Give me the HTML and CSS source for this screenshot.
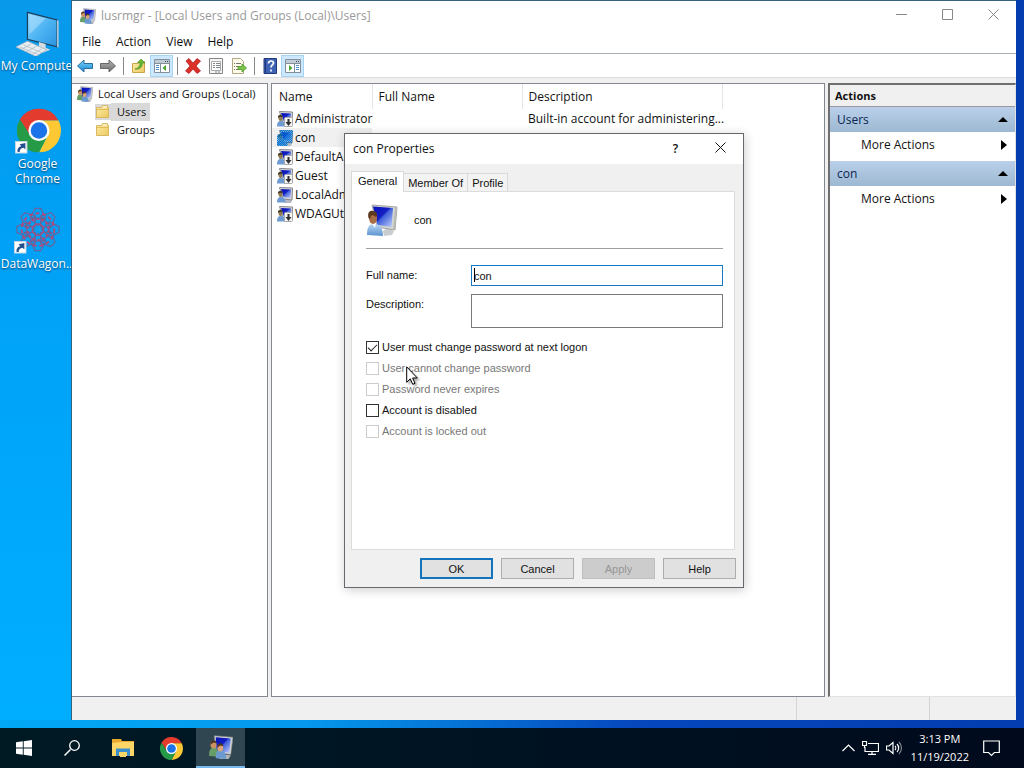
FILE: index.html
```html
<!DOCTYPE html>
<html lang="en">
<head>
<meta charset="utf-8">
<title>lusrmgr - [Local Users and Groups (Local)\Users]</title>
<link rel="stylesheet" href="styles.css">
</head>
<body>
<svg class="defs" aria-hidden="true">
  <defs>
    <linearGradient id="screen" x1="0" y1="0" x2="1" y2="1">
      <stop offset="0" stop-color="#0712b8"/><stop offset=".45" stop-color="#1420c4"/><stop offset=".5" stop-color="#3f5fd8"/><stop offset="1" stop-color="#c2d0ff"/>
    </linearGradient>
    <linearGradient id="glass" x1="0" y1="0" x2="1" y2="1">
      <stop offset="0" stop-color="#8fd4fb"/><stop offset=".5" stop-color="#4db4f3"/><stop offset="1" stop-color="#2a93df"/>
    </linearGradient>
    <linearGradient id="shirt" x1="0" y1="0" x2="0" y2="1">
      <stop offset="0" stop-color="#b9d6f3"/><stop offset="1" stop-color="#5b93cf"/>
    </linearGradient>
    <linearGradient id="paper" x1="0" y1="0" x2="1" y2="1">
      <stop offset="0" stop-color="#fdeea9"/><stop offset="1" stop-color="#ecc95f"/>
    </linearGradient>
    <linearGradient id="blue" x1="0" y1="0" x2="0" y2="1">
      <stop offset="0" stop-color="#7fd4fa"/><stop offset="1" stop-color="#1586d0"/>
    </linearGradient>
    <linearGradient id="grey" x1="0" y1="0" x2="0" y2="1">
      <stop offset="0" stop-color="#b4b4b4"/><stop offset="1" stop-color="#6c6c6c"/>
    </linearGradient>
    <pattern id="dither" width="2" height="2" patternUnits="userSpaceOnUse">
      <path d="M0 0h1v1H0zM1 1h1v1H1z" fill="#0078d7"/>
    </pattern>
    <symbol id="user" viewBox="0 0 32 32">
      <path d="M17 27l4-3 7 3-2 4-8 1z" fill="#c9cdd0"/>
      <path d="M6 1l25 2-2 23-18-3z" fill="#d4d6d3" stroke="#8f928e" stroke-width=".8"/>
      <path d="M7 2.500l20 1.500-1.500 19-14-2z" fill="url(#screen)"/>
      <path d="M29 4l2-1-2 23-2-1z" fill="#b8bcb4"/>
      <path d="M1 31c0-8 2-11 7-11s9 3 9 12z" fill="url(#shirt)"/>
      <path d="M5 18h5l-1 6z" fill="#fff"/>
      <ellipse cx="7" cy="14" rx="4" ry="6" fill="#a86f45"/>
      <path d="M2.500 14C1 7 5 6.500 7 7c4 0 5 4 3 6l-3-2-2 1-1 3z" fill="#5b3a20"/>
    </symbol>
    <symbol id="user-small" viewBox="0 0 16 16">
      <path d="M7 14l3-2 5 1-1 3H7z" fill="#b5bac2"/>
      <path d="M2.500.5l13 .5-.5 12-9-1z" fill="#dadada" stroke="#85858d"/>
      <path d="M4 2l10 .5-.5 8.500-7-1z" fill="url(#screen)"/>
      <path d="M0 15.500C0 12 1 10 4 10s4.500 2 4.500 5.500z" fill="#6d9bd2"/>
      <ellipse cx="3.500" cy="7" rx="2" ry="3" fill="#8d7a50"/>
      <path d="M1 7C0 3 6 2.500 5.500 6L3 6z" fill="#4b4128"/>
    </symbol>
    <symbol id="users" viewBox="0 0 32 32">
      <path d="M14 26l15 1-3 5H14z" fill="#b4b8bb"/>
      <path d="M7 1l25 2-3 23-20-2z" fill="#cfd1d0" stroke="#858885" stroke-width=".8"/>
      <path d="M9 3l20 1.500-2 19-17-2z" fill="url(#screen)"/>
      <path d="M0 28c0-8 2-11 6-11s7 3 7 12z" fill="#679e68"/>
      <path d="M9 31c0-8 2-11 6-11s8 3 8 12z" fill="#6c9ad0"/>
      <ellipse cx="6" cy="13" rx="4" ry="5" fill="#c99362"/>
      <ellipse cx="15" cy="17" rx="4" ry="5" fill="#d8a579"/>
      <path d="M2 13c0-8 8-7 8-2L6 10zM11 17c0-8 8-7 8-2l-4-1z" fill="#4f3520"/>
    </symbol>
    <symbol id="user-off" viewBox="0 0 16 16">
      <use href="#user-small" width="16" height="16"/>
      <rect x="7.500" y="6.500" width="8" height="9" rx="1" fill="#f4f4f4" stroke="#a8a8a8"/>
      <path d="M11.500 8v5" stroke="#303030" stroke-width="2"/><path d="M8.500 11h6l-3 4z" fill="#303030"/>
    </symbol>
    <symbol id="user-sel" viewBox="0 0 16 16">
      <use href="#user-small" width="16" height="16"/>
      <path d="M3 0h13l-1 13h-4l-1 3H0V5l3-1z" fill="#0078d7" opacity=".35"/>
      <path d="M3 0h13l-1 13h-4l-1 3H0V5l3-1z" fill="url(#dither)"/>
    </symbol>
    <symbol id="folder" viewBox="0 0 16 16">
      <path d="M1.500 3.500h5l1-2h5v2h1v10h-12z" fill="url(#paper)" stroke="#d9b75f"/>
      <path d="M8 3h4" stroke="#fff"/><path d="M2 5.500h11" stroke="#e3bd5c"/>
    </symbol>
    <symbol id="chrome" viewBox="0 0 48 48">
      <path d="M24 13h21.300A24 24 0 0 0 3.200 12L14.500 30z" fill="#e33b2e"/>
      <path d="M33.500 29.500L24 48A24 24 0 0 0 45.300 13H24z" fill="#fcc934"/>
      <path d="M14.500 29.500L3.200 12A24 24 0 0 0 24 48l9.500-18.500z" fill="#259b48"/>
      <circle cx="24" cy="24" r="11.500" fill="#fff"/><circle cx="24" cy="24" r="9" fill="#1a73e8"/>
    </symbol>
    <symbol id="shortcut" viewBox="0 0 12 12">
      <path d="M0 0h12v12H0z" fill="#fff"/><path d="M.5.5h11v11H.5z" fill="none" stroke="#c4d4e2"/>
      <path d="M2.500 10.500C2 7 4 5.500 6 5L4.500 3 10 2v6L8 6.500C6 7 4.500 8 4.500 10.500z" fill="#24508f"/>
    </symbol>
  </defs>
</svg>

<main class="desktop">
  <nav class="shortcuts" aria-label="Desktop">
    <a class="shortcut" href="#">
      <svg class="shortcut-icon" viewBox="0 0 48 48">
        <path d="M14 3l31 8v28l-31-8z" fill="url(#glass)" stroke="#1d3d58" stroke-width="1.200"/>
        <path d="M45 11l1.500 1v28L45 39z" fill="#c6d2da"/>
        <path d="M16 5l17 4.500L16 26z" fill="#b5e3ff" opacity=".5"/>
        <path d="M26 34l7 2v4l5 2-8 3-8-4 4-2z" fill="#d5dde2"/>
        <path d="M2 39l12-6 20 9-11 7z" fill="#e9eef1" stroke="#9fb1bd" stroke-width=".8"/>
        <path d="M6 39l19 8M10 37l19 8M7 42l11-6M13 44l11-6M19 47l10-6" stroke="#a9bac5" stroke-width=".8"/>
      </svg>
      <span>My Compute</span>
    </a>
    <a class="shortcut" href="#">
      <svg class="shortcut-icon" viewBox="0 0 48 48"><use href="#chrome" x="2" y="1" width="46" height="46"/><use href="#shortcut" x="0" y="35" width="13" height="13"/></svg>
      <span>Google Chrome</span>
    </a>
    <a class="shortcut" href="#">
      <svg class="shortcut-icon" viewBox="0 0 48 48">
        <g transform="translate(25 23)" fill="none" stroke="#65649c" stroke-width="1.300">
          <path id="petal" d="M0-4l8-8-5-10h-6l-5 10zM-8-12h16"/>
          <use href="#petal" transform="rotate(45)"/><use href="#petal" transform="rotate(90)"/><use href="#petal" transform="rotate(135)"/><use href="#petal" transform="rotate(180)"/><use href="#petal" transform="rotate(225)"/><use href="#petal" transform="rotate(270)"/><use href="#petal" transform="rotate(315)"/>
          <circle r="17" stroke="#b2487c" stroke-width="2" stroke-dasharray="4 3"/><circle r="11" stroke="#b2487c" stroke-width="2" stroke-dasharray="3 2"/><circle r="6" stroke="#b2487c"/>
        </g>
        <use href="#shortcut" x="0" y="35" width="13" height="13"/>
      </svg>
      <span>DataWagon..</span>
    </a>
  </nav>

  <section class="window">
    <header class="titlebar">
      <svg class="icon"><use href="#users"/></svg>
      <h1 class="title">lusrmgr - [Local Users and Groups (Local)\Users]</h1>
      <button class="caption" aria-label="Minimize"><svg viewBox="0 0 11 11"><path d="M0 5.500h11"/></svg></button>
      <button class="caption" aria-label="Maximize"><svg viewBox="0 0 11 11"><path d="M.5.5h10v10H.5z"/></svg></button>
      <button class="caption" aria-label="Close"><svg viewBox="0 0 11 11"><path d="M.5.5l10 10M10.500.5l-10 10"/></svg></button>
    </header>
    <nav class="menubar">
      <button>File</button><button>Action</button><button>View</button><button>Help</button>
    </nav>
    <div class="toolbar">
      <button aria-label="Back"><svg class="icon" viewBox="0 0 16 16"><path d="M.5 8L7 2v3.500h8.500v5H7V14z" fill="url(#blue)" stroke="#2a6f9e"/></svg></button>
      <button aria-label="Forward"><svg class="icon" viewBox="0 0 16 16"><path d="M15.500 8L9 2v3.500H.5v5H9V14z" fill="url(#grey)" stroke="#666"/></svg></button>
      <span class="separator"></span>
      <button aria-label="Up one level"><svg class="icon" viewBox="0 0 16 16"><path d="M1.500 5.500h5l1-2h6v11h-12z" fill="url(#paper)" stroke="#c7a447"/><path d="M4 11c4-1 5-4 5-6H6.500L10 1l4 4h-2.500c0 4-3 7-7.500 6z" fill="#67b83a" stroke="#4a8d27" stroke-width=".6"/></svg></button>
      <button class="pressed" aria-label="Show console tree"><svg class="icon" viewBox="0 0 16 16"><path d="M.5 1.500h15v13H.5z" fill="#fff" stroke="#83909b"/><path d="M1 2h14v3H1z" fill="#bfcbd5"/><path d="M11 3.500h1M13 3.500h1" stroke="#345"/><path d="M1 5.500h14M6.500 6v8" stroke="#83909b"/><path d="M2 7.500h3M2 9.500h3M2 11.500h3" stroke="#4c92cf"/><path d="M12 7v6L8.500 10z" fill="#4aa62e"/></svg></button>
      <span class="separator"></span>
      <button aria-label="Delete"><svg class="icon" viewBox="0 0 16 16"><path d="M1 3l3-2.500L8 5l4-4.500L15.500 3 11 8l4.500 5-3.500 2.500L8 11l-4 4.500L.5 13 5 8z" fill="#dc3029" stroke="#a71a18" stroke-width=".7"/></svg></button>
      <button aria-label="Properties"><svg class="icon" viewBox="0 0 16 16"><path d="M1.500.5h13v15h-13z" fill="#f6f6f6" stroke="#848484"/><path d="M3.500 3.500h9v9h-9z" fill="#fff" stroke="#aaa"/><path d="M5 5.500h2M8 5.500h4M5 7.500h2M8 7.500h4M5 9.500h2M8 9.500h4M7 14h2M10 14h2" stroke="#7d858d"/></svg></button>
      <button aria-label="Export list"><svg class="icon" viewBox="0 0 16 16"><path d="M1.500.5h8l3 3v12h-11z" fill="#fffbe9" stroke="#b2a885"/><path d="M3 5.500h1M5 5.500h5M3 8.500h1M5 8.500h3M3 11.500h1M5 11.500h3" stroke="#777"/><path d="M7 8.500h4V6l4.500 4-4.500 4v-2.500H7z" fill="#7bc64a" stroke="#4c9b2a" stroke-width=".8"/></svg></button>
      <span class="separator"></span>
      <button aria-label="Help"><svg class="icon" viewBox="0 0 16 16"><path d="M2 .5h12.500v15H2z" fill="#3f63b4" stroke="#223a7c"/><path d="M3.500 1v14" stroke="#1f3a83"/><path d="M6.500 5.500c0-3.500 5-3 5-.5 0 2-2.500 2-2.500 4.500M9 11.500v2" fill="none" stroke="#fff" stroke-width="1.700"/></svg></button>
      <button class="pressed" aria-label="Show action pane"><svg class="icon" viewBox="0 0 16 16"><path d="M.5 1.500h15v13H.5z" fill="#fff" stroke="#83909b"/><path d="M1 2h14v3H1z" fill="#bfcbd5"/><path d="M11 3.500h1M13 3.500h1" stroke="#345"/><path d="M1 5.500h14M9.500 6v8" stroke="#83909b"/><path d="M11 7.500h3M11 9.500h3M11 11.500h3" stroke="#4c92cf"/><path d="M4 7v6l3.500-3z" fill="#4aa62e"/></svg></button>
    </div>

    <div class="panes">
      <ul class="pane tree">
        <li><svg class="icon"><use href="#users"/></svg><span>Local Users and Groups (Local)</span></li>
        <li class="child selected"><svg class="icon"><use href="#folder"/></svg><span>Users</span></li>
        <li class="child"><svg class="icon"><use href="#folder"/></svg><span>Groups</span></li>
      </ul>

      <div class="pane list">
        <table>
          <thead><tr><th>Name</th><th>Full Name</th><th>Description</th></tr></thead>
          <tbody>
            <tr><td><div class="entry"><svg class="icon"><use href="#user-off"/></svg>Administrator</div></td><td></td><td>Built-in account for administering...</td></tr>
            <tr class="current"><td><div class="entry"><svg class="icon"><use href="#user-sel"/></svg>con</div></td><td></td><td></td></tr>
            <tr><td><div class="entry"><svg class="icon"><use href="#user-off"/></svg>DefaultAc</div></td><td></td><td></td></tr>
            <tr><td><div class="entry"><svg class="icon"><use href="#user-off"/></svg>Guest</div></td><td></td><td></td></tr>
            <tr><td><div class="entry"><svg class="icon"><use href="#user-small"/></svg>LocalAdm</div></td><td></td><td></td></tr>
            <tr><td><div class="entry"><svg class="icon"><use href="#user-off"/></svg>WDAGUti</div></td><td></td><td></td></tr>
          </tbody>
        </table>
      </div>

      <aside class="pane actions">
        <h2>Actions</h2>
        <button class="group">Users<svg class="up" viewBox="0 0 10 5"><path d="M5 0l5 5H0z"/></svg></button>
        <button class="more">More Actions<svg class="right" viewBox="0 0 6 10"><path d="M0 0l6 5-6 5z"/></svg></button>
        <button class="group">con<svg class="up" viewBox="0 0 10 5"><path d="M5 0l5 5H0z"/></svg></button>
        <button class="more">More Actions<svg class="right" viewBox="0 0 6 10"><path d="M0 0l6 5-6 5z"/></svg></button>
      </aside>
    </div>
    <footer class="statusbar"><span></span><span></span><span></span></footer>
  </section>

  <form class="dialog" role="dialog" aria-labelledby="dialog-title">
    <header class="dialog-title">
      <h2 id="dialog-title">con Properties</h2>
      <button type="button" class="dialog-help" aria-label="Help">?</button>
      <button type="button" aria-label="Close"><svg viewBox="0 0 11 11"><path d="M.5.5l10 10M10.500.5l-10 10"/></svg></button>
    </header>
    <div class="dialog-body">
      <div class="tabs" role="tablist">
        <button type="button" role="tab" class="tab active" aria-selected="true">General</button>
        <button type="button" role="tab" class="tab">Member Of</button>
        <button type="button" role="tab" class="tab">Profile</button>
      </div>
      <div class="sheet" role="tabpanel">
        <div class="identity"><svg class="avatar"><use href="#user"/></svg><span>con</span></div>
        <div class="fields">
          <label for="fullname">Full name:</label>
          <div class="edit"><input id="fullname" type="text" value="con"></div>
          <label for="description">Description:</label>
          <textarea id="description"></textarea>
        </div>
        <div class="options">
          <label><input type="checkbox" checked>User must change password at next logon</label>
          <label class="off"><input type="checkbox" disabled>User cannot change password</label>
          <label class="off"><input type="checkbox" disabled>Password never expires</label>
          <label><input type="checkbox">Account is disabled</label>
          <label class="off"><input type="checkbox" disabled>Account is locked out</label>
        </div>
      </div>
      <div class="buttons">
        <button type="button" class="default">OK</button>
        <button type="button">Cancel</button>
        <button type="button" disabled>Apply</button>
        <button type="button">Help</button>
      </div>
    </div>
  </form>

  <svg class="pointer" viewBox="0 0 12 19"><path d="M.7.8v15.500l3.600-3.500 2.400 5.500 2.300-1-2.400-5.300h4.700z" fill="#fff" stroke="#000"/></svg>
</main>

<footer class="taskbar">
  <div class="system">
    <button class="task" aria-label="Start"><svg width="16" height="16" viewBox="0 0 16 16"><path d="M0 2.300L6.800 1.300v6.300H0zM7.700 1.200L16 0v7.600H7.700zM0 8.500h6.800v6.300L0 13.800zM7.700 8.500H16V16l-8.300-1.200z" fill="#fff"/></svg></button>
    <button class="task" aria-label="Search"><svg width="16" height="16" viewBox="0 0 16 16"><path d="M6.500 9.500L.5 15.500" stroke="#fff" stroke-width="1.500"/><circle cx="10.500" cy="5.500" r="4.800" fill="none" stroke="#fff" stroke-width="1.300"/></svg></button>
  </div>
  <button class="task" aria-label="File Explorer"><svg width="22" height="18" viewBox="0 0 22 18"><path d="M0 0h9l1 2h12v15H0z" fill="#e8a92e"/><path d="M0 4l10-1h12v14H0z" fill="#fcd768"/><path d="M4 9.500h14V17h-3v-4H7v4H4z" fill="#3c8fcd"/><path d="M8 13h6v5H8z" fill="#fcd768"/></svg></button>
  <button class="task" aria-label="Google Chrome"><svg width="23" height="23"><use href="#chrome"/></svg></button>
  <button class="task running" aria-label="lusrmgr"><svg width="24" height="24"><use href="#users"/></svg></button>
  <div class="tray">
    <svg width="13" height="8" viewBox="0 0 13 8"><path d="M.5 7l6-6 6 6"/></svg>
    <svg width="17" height="14" viewBox="0 0 17 14"><path d="M6 2.500h10.500v8H3V6M10 10.500V13M6 13.300h8M.5.500h4v4h-4zM2.500 4.500V7"/></svg>
    <svg width="17" height="14" viewBox="0 0 17 14"><path d="M.5 5v4H3l4 3.500V1.500L3 5zM9 5c1 1 1 3 0 4M11 3c2.200 2.200 2.200 5.800 0 8"/><path d="M13 1c3.300 3.400 3.300 8.600 0 12" opacity=".5"/></svg>
    <time datetime="2022-11-19T15:13">3:13 PM<br>11/19/2022</time>
    <svg width="17" height="17" viewBox="0 0 17 17"><path d="M.7 1h15.600v11.500h-5L8.500 15.500l-3-3H.7z"/></svg>
  </div>
</footer>
</body>
</html>
```
FILE: styles.css
```css
* { box-sizing: border-box; }

body {
  margin: 0;
  height: 100vh;
  display: flex;
  flex-direction: column;
  overflow: hidden;
  font: 12px/16px "Open Sans", "Noto Sans", sans-serif;
  color: #111;
}

h1, h2, ul { margin: 0; padding: 0; font: inherit; list-style: none; }
button { margin: 0; padding: 0; border: 0; background: none; font: inherit; color: inherit; }
.defs { position: absolute; width: 0; height: 0; }
.icon { flex: none; width: 16px; height: 16px; }

/* Desktop */
.desktop {
  position: relative;
  flex: 1;
  min-height: 0;
  display: flex;
  padding: 0 8px 8px 0;
  background: linear-gradient(90deg, #02a8f5 0%, #0598ec 30%, #0647bd 62%, #033db0 100%);
}
.shortcuts {
  flex: none;
  width: 71px;
  display: flex;
  flex-direction: column;
  gap: 20px;
  padding-top: 8px;
  background: linear-gradient(#0899ea, #00a0f5 30%, #00aeff);
}
.shortcut {
  display: flex;
  flex-direction: column;
  align-items: center;
  gap: 1px;
  padding: 0 2px 0 6px;
  color: #fff;
  line-height: 15px;
  text-align: center;
  text-decoration: none;
  text-shadow: 0 1px 2px #00365e;
}
.shortcut-icon { width: 48px; height: 49px; padding: 1px; }
.shortcut:first-child, .shortcut:last-child { padding: 0 0 0 2px; white-space: nowrap; }
.shortcut:first-child { padding-bottom: 13px; }

/* Console window */
.window {
  flex: 1;
  min-width: 0;
  display: flex;
  flex-direction: column;
  border: solid #35627f;
  border-width: 1px 0 0 1px;
  background: #f0f0f0;
}
.titlebar {
  display: flex;
  align-items: center;
  height: 30px;
  padding-left: 8px;
  background: #fff;
}
.title { flex: 1; margin-left: 5px; color: #999; }
.caption { width: 46px; height: 28px; }
.caption svg, .dialog-title svg { width: 11px; height: 11px; fill: none; stroke: #888; }
.dialog-title svg { stroke: #111; }
.menubar { display: flex; gap: 15px; height: 23px; padding: 0 10px; background: #fff; border-bottom: 1px solid #a9b0b8; }
.toolbar { display: flex; align-items: center; height: 24px; padding-left: 1px; background: #fff; border-bottom: 1px solid #ddd; }
.toolbar button { width: 23px; height: 22px; display: flex; align-items: center; justify-content: center; }
.toolbar .pressed { background: #cce8ff; border: 1px solid #a8d4f4; }
.separator { width: 1px; height: 18px; margin: 0 3px 0 4px; background: #888; }

.panes {
  flex: 1;
  min-height: 0;
  display: grid;
  grid-template-columns: 196px minmax(0, 1fr) 188px;
  gap: 3px;
  padding-top: 5px;
}
.pane { min-width: 0; background: #fff; border: 1px solid #828790; overflow: hidden; }
.tree { padding-top: 1px; border-left: 0; font-size: 11px; }
.tree li { display: flex; align-items: center; height: 18px; padding-left: 5px; white-space: nowrap; }
.tree span { padding: 1px 4px 1px 5px; }
.tree .child { padding-left: 23px; }
.tree .child span { padding-left: 6px; }
.tree .selected .icon, .tree .selected span { background: #d9d9d9; }

.list table { width: 450px; table-layout: fixed; border-collapse: collapse; }
.list th { width: 150px; height: 25px; padding: 0 6px; border-right: 1px solid #e5e5e5; font-weight: 400; text-align: left; }
.list th:first-child { width: 100px; padding-left: 7px; }
.list th:last-child { width: 200px; }
.list td { height: 19px; padding: 0 0 0 6px; white-space: nowrap; }
.list td:first-child { padding: 0 0 0 5px; }
.entry { display: flex; align-items: center; gap: 2px; }
.current td:first-child { background: #f0f0f0; }

.actions { display: flex; flex-direction: column; border: solid #6f6f6f; border-width: 2px 1px 1px 2px; border-right-color: #e2e2e2; border-bottom-color: #e2e2e2; }
.actions h2 { height: 22px; padding: 3px 5px; background: #f0f0f0; border-bottom: 1px solid #999; font-size: 11px; font-weight: 700; }
.actions button { display: flex; align-items: center; justify-content: space-between; height: 25px; flex: none; }
.actions .group { padding: 0 7px; background: linear-gradient(#bad0ea, #9db8d2); color: #0b2550; }
.actions .more { margin-bottom: 4px; padding: 0 8px 0 31px; }
.actions .up { width: 10px; height: 5px; fill: #000; }
.actions .right { width: 6px; height: 10px; fill: #000; }

.statusbar { display: grid; grid-template-columns: 1fr 133px 87px; height: 23px; }
.statusbar span + span { border-left: 1px solid #d4d4d4; }

/* Properties dialog */
.dialog {
  position: absolute;
  left: 344px;
  top: 133px;
  width: 400px;
  display: flex;
  flex-direction: column;
  border: 1px solid #65686c;
  background: #f0f0f0;
  box-shadow: 1px 2px 10px #0003;
}
.dialog-title { display: flex; align-items: center; height: 30px; padding-left: 8px; background: #fff; }
.dialog-title h2 { flex: 1; }
.dialog-title button { width: 45px; height: 30px; }
.dialog-help { font-weight: 600; }
.dialog-body { padding: 7px 7px 8px 6px; font: 11px/14px "Liberation Sans", Arial, sans-serif; }
.tabs { display: flex; align-items: flex-end; height: 20px; }
.tab { height: 18px; padding: 0 4px; background: #f3f3f3; border: 1px solid #d9d9d9; border-bottom: 0; border-left: 0; }
.tab.active { position: relative; height: 21px; margin-bottom: -1px; padding: 0 6px 2px; background: #fff; border-left: 1px solid #d9d9d9; }
.sheet { height: 359px; margin-right: 1px; padding: 12px 11px 12px 14px; background: #fff; border: 1px solid #dcdcdc; }
.identity { display: flex; align-items: center; gap: 16px; height: 45px; padding-bottom: 12px; border-bottom: 1px solid #a0a0a0; }
.avatar { width: 32px; height: 32px; }
.fields { display: grid; grid-template-columns: 105px 1fr; gap: 8px 0; margin-top: 16px; }
.fields label { padding-top: 3px; }
.fields input, .fields textarea { display: block; width: 100%; margin: 0; border: 1px solid #7a7a7a; border-radius: 0; background: #fff; padding: 0 2px; font: inherit; color: inherit; outline: 0; resize: none; }
.fields input { height: 21px; border-color: #1679c2; }
.fields textarea { height: 34px; }
.edit { position: relative; }
.edit::before { content: ""; position: absolute; left: 3px; top: 3px; width: 1px; height: 14px; background: #000; }
.options { display: flex; flex-direction: column; align-items: flex-start; gap: 7px; margin-top: 12px; }
.options label { display: flex; align-items: center; gap: 3px; }
.options .off { color: #777; }
.options input { appearance: none; display: grid; width: 13px; height: 13px; margin: 0; border: 1px solid #333; background: #fff; }
.options input:disabled { border-color: #ccc; }
.options input:checked::before { content: ""; width: 8px; height: 4px; margin: 2px 1px; border: solid #222; border-width: 0 0 1px 1px; transform: rotate(-45deg); }
.buttons { display: flex; justify-content: flex-end; gap: 8px; margin-top: 8px; }
.buttons button { width: 73px; height: 21px; background: #e1e1e1; border: 1px solid #adadad; }
.buttons .default { border: 2px solid #1373bd; }
.buttons button:disabled { background: #ccc; border-color: #bfbfbf; color: #969696; }

.pointer { position: absolute; left: 406px; top: 366px; width: 12px; height: 19px; filter: drop-shadow(2px 2px 1px #0005); }

/* Taskbar */
.taskbar { flex: none; display: flex; height: 40px; background: linear-gradient(90deg, #001a24, #001323 50%, #000a1c); color: #fff; }
.system { display: flex; margin-right: 2px; }
.task { width: 49px; display: flex; align-items: center; justify-content: center; }
.system .task { width: 48px; }
.task.running { background: #304752; border-bottom: 2px solid #76b9ed; }
.tray { display: flex; align-items: center; gap: 7px; margin-left: auto; padding-right: 24px; text-align: center; font-size: 11px; line-height: 18px; }
.tray svg { fill: none; stroke: #fff; stroke-width: 1.2; }
.tray time { margin: 0 7px 0 1px; }
```
